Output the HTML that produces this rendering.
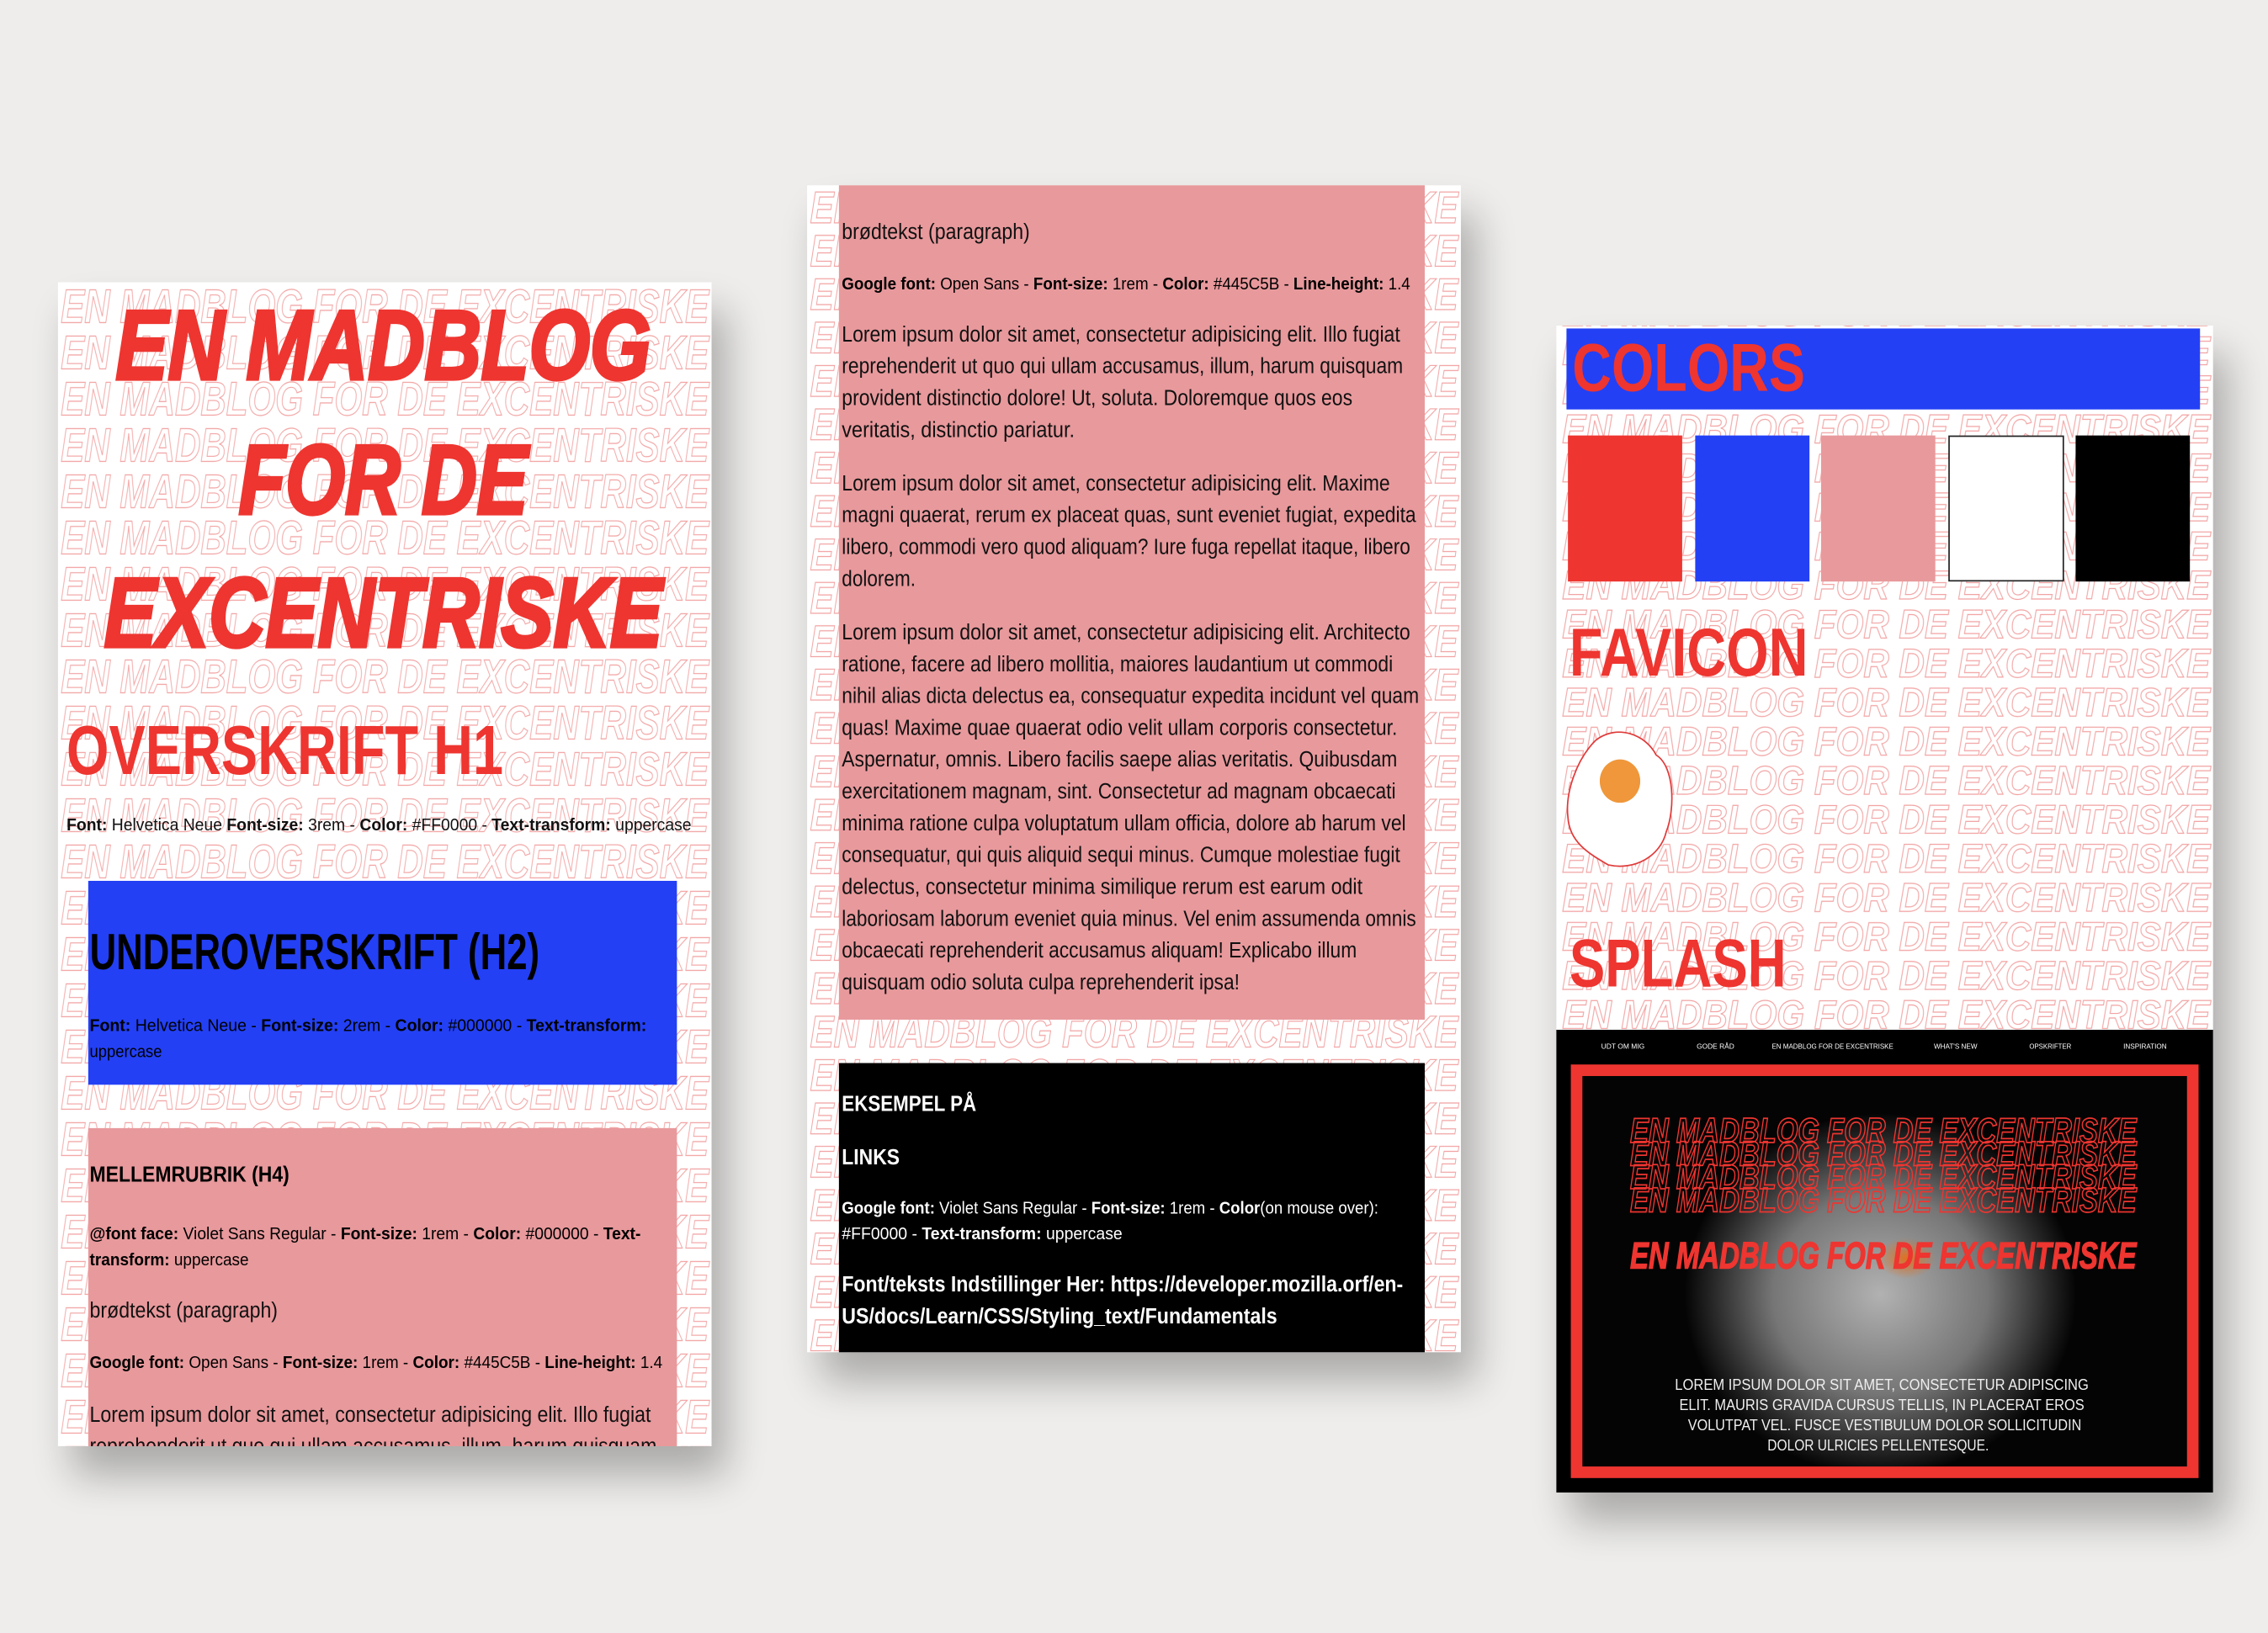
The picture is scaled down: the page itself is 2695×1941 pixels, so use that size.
<!DOCTYPE html>
<html><head><meta charset="utf-8"><style>
html,body{margin:0;padding:0;background:#eeedeb;}
svg{display:block}
text{font-family:"Liberation Sans",Arial,sans-serif}
</style></head><body>
<svg width="2695" height="1941" viewBox="0 0 1568 1129" xmlns="http://www.w3.org/2000/svg">
<defs>
<filter id="sh" x="-20%" y="-20%" width="140%" height="140%"><feGaussianBlur stdDeviation="14"/></filter>
<clipPath id="clL"><rect x="40" y="195" width="452" height="805"/></clipPath>
<clipPath id="clF"><rect x="1094" y="744" width="418" height="270"/></clipPath>
<pattern id="patL" patternUnits="userSpaceOnUse" x="40" y="195" width="452" height="32">
<text x="2" y="28" font-size="33" font-weight="bold" font-style="italic" textLength="448" lengthAdjust="spacingAndGlyphs" fill="#fff" stroke="#f2a3a3" stroke-width="0.7">EN MADBLOG FOR DE EXCENTRISKE</text></pattern>
<pattern id="patM" patternUnits="userSpaceOnUse" x="558" y="128" width="452" height="30">
<text x="2" y="26" font-size="31" font-weight="bold" font-style="italic" textLength="448" lengthAdjust="spacingAndGlyphs" fill="#fff" stroke="#f2a3a3" stroke-width="0.7">EN MADBLOG FOR DE EXCENTRISKE</text></pattern>
<pattern id="patR" patternUnits="userSpaceOnUse" x="1076" y="228" width="454" height="27">
<text x="4" y="24" font-size="28" font-weight="bold" font-style="italic" textLength="448" lengthAdjust="spacingAndGlyphs" fill="#fff" stroke="#f2a3a3" stroke-width="0.7">EN MADBLOG FOR DE EXCENTRISKE</text></pattern>
<radialGradient id="egg" cx="0.5" cy="0.5" r="0.5">
<stop offset="0" stop-color="#d0d0d0"/><stop offset="0.55" stop-color="#8a8a8a"/><stop offset="0.85" stop-color="#303030"/><stop offset="1" stop-color="#050505"/></radialGradient>
<radialGradient id="yolk" cx="0.5" cy="0.5" r="0.5"><stop offset="0" stop-color="#e07020"/><stop offset="1" stop-color="#e07020" stop-opacity="0"/></radialGradient>
</defs>
<rect width="1568" height="1129" fill="#eeedeb"/>

<rect x="50" y="215" width="452" height="805" fill="#000" opacity="0.28" filter="url(#sh)"/>
<rect x="568" y="148" width="452" height="807" fill="#000" opacity="0.28" filter="url(#sh)"/>
<rect x="1086" y="245" width="454" height="807" fill="#000" opacity="0.28" filter="url(#sh)"/>

<!-- LEFT PANEL -->
<g clip-path="url(#clL)">
<rect x="40" y="195" width="452" height="805" fill="#fff"/>
<rect x="40" y="195" width="452" height="805" fill="url(#patL)"/>
<g fill="#ee3530" stroke="#ee3530" stroke-width="2.5" font-weight="bold" font-style="italic" font-size="68">
<text x="80" y="262" textLength="370" lengthAdjust="spacingAndGlyphs">EN MADBLOG</text>
<text x="165" y="355" textLength="200" lengthAdjust="spacingAndGlyphs">FOR DE</text>
<text x="72" y="447" textLength="386" lengthAdjust="spacingAndGlyphs">EXCENTRISKE</text>
</g>
<text x="46" y="535" font-size="48" font-weight="bold" fill="#ee3530" textLength="302" lengthAdjust="spacingAndGlyphs">OVERSKRIFT H1</text>
<text x="46" y="574" font-size="12" fill="#111" textLength="432" lengthAdjust="spacingAndGlyphs"><tspan font-weight="bold">Font:</tspan> Helvetica Neue <tspan font-weight="bold">Font-size:</tspan> 3rem - <tspan font-weight="bold">Color:</tspan> #FF0000 - <tspan font-weight="bold">Text-transform:</tspan> uppercase</text>
<rect x="61" y="609" width="407" height="141" fill="#2340f5"/>
<text x="62" y="670" font-size="35" font-weight="bold" fill="#000" textLength="311" lengthAdjust="spacingAndGlyphs">UNDEROVERSKRIFT (H2)</text>
<text x="62" y="713" font-size="12" fill="#000" textLength="385" lengthAdjust="spacingAndGlyphs"><tspan font-weight="bold">Font:</tspan> Helvetica Neue - <tspan font-weight="bold">Font-size:</tspan> 2rem - <tspan font-weight="bold">Color:</tspan> #000000 - <tspan font-weight="bold">Text-transform:</tspan></text>
<text x="62" y="731" font-size="12" fill="#000" textLength="50" lengthAdjust="spacingAndGlyphs">uppercase</text>
<rect x="61" y="780" width="407" height="220" fill="#e8999c"/>
<text x="62" y="817" font-size="15" font-weight="bold" fill="#000" textLength="138" lengthAdjust="spacingAndGlyphs">MELLEMRUBRIK (H4)</text>
<text x="62" y="857" font-size="12" fill="#000" textLength="381" lengthAdjust="spacingAndGlyphs"><tspan font-weight="bold">@font face:</tspan> Violet Sans Regular - <tspan font-weight="bold">Font-size:</tspan> 1rem - <tspan font-weight="bold">Color:</tspan> #000000 - <tspan font-weight="bold">Text-</tspan></text>
<text x="62" y="875" font-size="12" fill="#000" textLength="110" lengthAdjust="spacingAndGlyphs"><tspan font-weight="bold">transform:</tspan> uppercase</text>
<text x="62" y="911" font-size="15" fill="#111" textLength="130" lengthAdjust="spacingAndGlyphs">brødtekst (paragraph)</text>
<text x="62" y="946" font-size="12" fill="#000" textLength="396" lengthAdjust="spacingAndGlyphs"><tspan font-weight="bold">Google font:</tspan> Open Sans - <tspan font-weight="bold">Font-size:</tspan> 1rem - <tspan font-weight="bold">Color:</tspan> #445C5B - <tspan font-weight="bold">Line-height:</tspan> 1.4</text>
<text x="62" y="983" font-size="15" fill="#111" textLength="388" lengthAdjust="spacingAndGlyphs">Lorem ipsum dolor sit amet, consectetur adipisicing elit. Illo fugiat</text>
<text x="62" y="1005" font-size="15" fill="#111" textLength="392" lengthAdjust="spacingAndGlyphs">reprehenderit ut quo qui ullam accusamus, illum, harum quisquam</text>
</g>

<!-- MIDDLE PANEL -->
<rect x="558" y="128" width="452" height="807" fill="#fff"/>
<rect x="558" y="128" width="452" height="807" fill="url(#patM)"/>
<rect x="580" y="128" width="405" height="577" fill="#e8999c"/>
<text x="582" y="165" font-size="15" fill="#111" textLength="130" lengthAdjust="spacingAndGlyphs">brødtekst (paragraph)</text>
<text x="582" y="200" font-size="12" fill="#000" textLength="393" lengthAdjust="spacingAndGlyphs"><tspan font-weight="bold">Google font:</tspan> Open Sans - <tspan font-weight="bold">Font-size:</tspan> 1rem - <tspan font-weight="bold">Color:</tspan> #445C5B - <tspan font-weight="bold">Line-height:</tspan> 1.4</text>
<g font-size="15" fill="#111">
<text x="582" y="236" textLength="386" lengthAdjust="spacingAndGlyphs">Lorem ipsum dolor sit amet, consectetur adipisicing elit. Illo fugiat</text>
<text x="582" y="258" textLength="388" lengthAdjust="spacingAndGlyphs">reprehenderit ut quo qui ullam accusamus, illum, harum quisquam</text>
<text x="582" y="280" textLength="353" lengthAdjust="spacingAndGlyphs">provident distinctio dolore! Ut, soluta. Doloremque quos eos</text>
<text x="582" y="302" textLength="161" lengthAdjust="spacingAndGlyphs">veritatis, distinctio pariatur.</text>
<text x="582" y="339" textLength="379" lengthAdjust="spacingAndGlyphs">Lorem ipsum dolor sit amet, consectetur adipisicing elit. Maxime</text>
<text x="582" y="361" textLength="397" lengthAdjust="spacingAndGlyphs">magni quaerat, rerum ex placeat quas, sunt eveniet fugiat, expedita</text>
<text x="582" y="383" textLength="393" lengthAdjust="spacingAndGlyphs">libero, commodi vero quod aliquam? Iure fuga repellat itaque, libero</text>
<text x="582" y="405" textLength="51" lengthAdjust="spacingAndGlyphs">dolorem.</text>
<text x="582" y="442" textLength="393" lengthAdjust="spacingAndGlyphs">Lorem ipsum dolor sit amet, consectetur adipisicing elit. Architecto</text>
<text x="582" y="464" textLength="381" lengthAdjust="spacingAndGlyphs">ratione, facere ad libero mollitia, maiores laudantium ut commodi</text>
<text x="582" y="486" textLength="399" lengthAdjust="spacingAndGlyphs">nihil alias dicta delectus ea, consequatur expedita incidunt vel quam</text>
<text x="582" y="508" textLength="384" lengthAdjust="spacingAndGlyphs">quas! Maxime quae quaerat odio velit ullam corporis consectetur.</text>
<text x="582" y="530" textLength="384" lengthAdjust="spacingAndGlyphs">Aspernatur, omnis. Libero facilis saepe alias veritatis. Quibusdam</text>
<text x="582" y="552" textLength="383" lengthAdjust="spacingAndGlyphs">exercitationem magnam, sint. Consectetur ad magnam obcaecati</text>
<text x="582" y="574" textLength="390" lengthAdjust="spacingAndGlyphs">minima ratione culpa voluptatum ullam officia, dolore ab harum vel</text>
<text x="582" y="596" textLength="386" lengthAdjust="spacingAndGlyphs">consequatur, qui quis aliquid sequi minus. Cumque molestiae fugit</text>
<text x="582" y="618" textLength="360" lengthAdjust="spacingAndGlyphs">delectus, consectetur minima similique rerum est earum odit</text>
<text x="582" y="640" textLength="397" lengthAdjust="spacingAndGlyphs">laboriosam laborum eveniet quia minus. Vel enim assumenda omnis</text>
<text x="582" y="662" textLength="356" lengthAdjust="spacingAndGlyphs">obcaecati reprehenderit accusamus aliquam! Explicabo illum</text>
<text x="582" y="684" textLength="275" lengthAdjust="spacingAndGlyphs">quisquam odio soluta culpa reprehenderit ipsa!</text>
</g>
<rect x="580" y="735" width="405" height="200" fill="#000"/>
<text x="582" y="768" font-size="15" font-weight="bold" fill="#fff" textLength="93" lengthAdjust="spacingAndGlyphs">EKSEMPEL PÅ</text>
<text x="582" y="805" font-size="15" font-weight="bold" fill="#fff" textLength="40" lengthAdjust="spacingAndGlyphs">LINKS</text>
<text x="582" y="839" font-size="12" fill="#fff" textLength="371" lengthAdjust="spacingAndGlyphs"><tspan font-weight="bold">Google font:</tspan> Violet Sans Regular - <tspan font-weight="bold">Font-size:</tspan> 1rem - <tspan font-weight="bold">Color</tspan>(on mouse over):</text>
<text x="582" y="857" font-size="12" fill="#fff" textLength="194" lengthAdjust="spacingAndGlyphs">#FF0000 - <tspan font-weight="bold">Text-transform:</tspan> uppercase</text>
<text x="582" y="893" font-size="15" font-weight="bold" fill="#fff" textLength="388" lengthAdjust="spacingAndGlyphs">Font/teksts Indstillinger Her: https://developer.mozilla.orf/en-</text>
<text x="582" y="915" font-size="15" font-weight="bold" fill="#fff" textLength="301" lengthAdjust="spacingAndGlyphs">US/docs/Learn/CSS/Styling_text/Fundamentals</text>

<!-- RIGHT PANEL -->
<rect x="1076" y="225" width="454" height="807" fill="#fff"/>
<rect x="1076" y="225" width="454" height="487" fill="url(#patR)"/>
<rect x="1083" y="227" width="438" height="56" fill="#2340f5"/>
<text x="1087" y="270" font-size="47" font-weight="bold" fill="#ee3530" textLength="161" lengthAdjust="spacingAndGlyphs">COLORS</text>
<rect x="1084" y="301" width="79" height="101" fill="#ee3530"/>
<rect x="1172" y="301" width="79" height="101" fill="#2340f5"/>
<rect x="1259" y="301" width="79" height="101" fill="#e8999c"/>
<rect x="1347.5" y="301.5" width="79" height="100" fill="#fff" stroke="#222" stroke-width="1"/>
<rect x="1435" y="301" width="79" height="101" fill="#000"/>
<text x="1085" y="467" font-size="47" font-weight="bold" fill="#ee3530" textLength="165" lengthAdjust="spacingAndGlyphs">FAVICON</text>
<path d="M1103 512 C1118 500 1138 508 1145 522 C1158 530 1158 560 1152 575 C1148 592 1130 602 1112 598 C1098 590 1085 582 1084 565 C1082 548 1090 525 1103 512 Z" fill="#fff" stroke="#e03a3a" stroke-width="1"/>
<ellipse cx="1120" cy="540" rx="14" ry="15" fill="#ef973a"/>
<text x="1085" y="682" font-size="47" font-weight="bold" fill="#ee3530" textLength="150" lengthAdjust="spacingAndGlyphs">SPLASH</text>

<rect x="1076" y="712" width="454" height="320" fill="#000"/>
<g font-size="5" fill="#fff">
<text x="1107" y="725" textLength="30" lengthAdjust="spacingAndGlyphs">UDT OM MIG</text>
<text x="1173" y="725" textLength="26" lengthAdjust="spacingAndGlyphs">GODE RÅD</text>
<text x="1225" y="725" textLength="84" lengthAdjust="spacingAndGlyphs">EN MADBLOG FOR DE EXCENTRISKE</text>
<text x="1337" y="725" textLength="30" lengthAdjust="spacingAndGlyphs">WHAT'S NEW</text>
<text x="1403" y="725" textLength="29" lengthAdjust="spacingAndGlyphs">OPSKRIFTER</text>
<text x="1468" y="725" textLength="30" lengthAdjust="spacingAndGlyphs">INSPIRATION</text>
</g>
<rect x="1094" y="744" width="418" height="270" fill="#040404"/>
<g clip-path="url(#clF)">
<ellipse cx="1300" cy="895" rx="135" ry="125" fill="url(#egg)" opacity="0.85"/>
<ellipse cx="1318" cy="870" rx="20" ry="14" fill="url(#yolk)"/>
</g>
<rect x="1090" y="740" width="426" height="278" fill="none" stroke="#ee3530" stroke-width="8"/>
<g font-size="24" font-weight="bold" font-style="italic" fill="none" stroke="#ee3530" stroke-width="1">
<text x="1127" y="790" textLength="350" lengthAdjust="spacingAndGlyphs">EN MADBLOG FOR DE EXCENTRISKE</text>
<text x="1127" y="806" textLength="350" lengthAdjust="spacingAndGlyphs">EN MADBLOG FOR DE EXCENTRISKE</text>
<text x="1127" y="822" textLength="350" lengthAdjust="spacingAndGlyphs">EN MADBLOG FOR DE EXCENTRISKE</text>
<text x="1127" y="838" textLength="350" lengthAdjust="spacingAndGlyphs">EN MADBLOG FOR DE EXCENTRISKE</text>
</g>
<text x="1127" y="877" font-size="26" font-weight="bold" font-style="italic" fill="#ee3530" stroke="#ee3530" stroke-width="0.8" textLength="350" lengthAdjust="spacingAndGlyphs">EN MADBLOG FOR DE EXCENTRISKE</text>
<g font-size="11" fill="#eee">
<text x="1158" y="961" textLength="286" lengthAdjust="spacingAndGlyphs">LOREM IPSUM DOLOR SIT AMET, CONSECTETUR ADIPISCING</text>
<text x="1161" y="975" textLength="280" lengthAdjust="spacingAndGlyphs">ELIT. MAURIS GRAVIDA CURSUS TELLIS, IN PLACERAT EROS</text>
<text x="1167" y="989" textLength="272" lengthAdjust="spacingAndGlyphs">VOLUTPAT VEL. FUSCE VESTIBULUM DOLOR SOLLICITUDIN</text>
<text x="1222" y="1003" textLength="153" lengthAdjust="spacingAndGlyphs">DOLOR ULRICIES PELLENTESQUE.</text>
</g>
</svg>
</body></html>
